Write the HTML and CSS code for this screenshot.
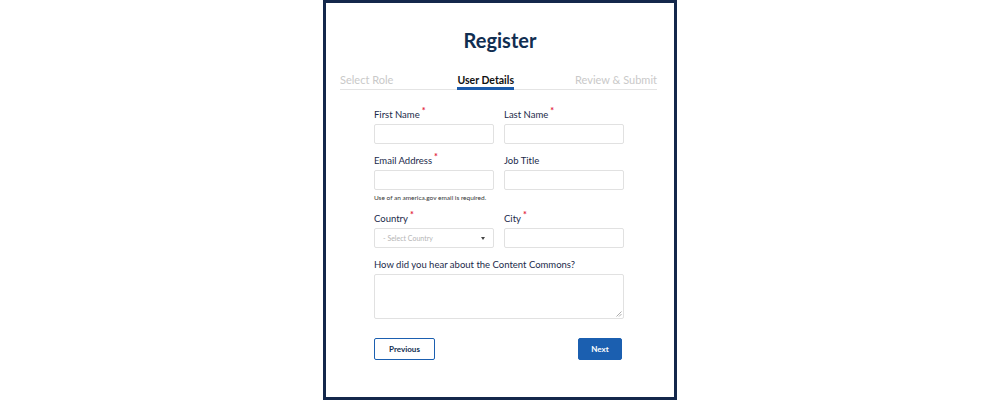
FILE: index.html
```html
<!DOCTYPE html>
<html>
<head>
<meta charset="utf-8">
<link rel="stylesheet" href="styles.css">
</head>
<body>
<div class="frame">
  <h1 class="title">Register</h1>
  <div class="tabs">
    <span class="tab">Select Role</span>
    <span class="tab active">User Details</span>
    <span class="tab">Review &amp; Submit</span>
  </div>
  <form class="form">
    <div class="row">
      <div class="field">
        <label class="label">First Name<sup class="req">*</sup></label>
        <div class="input"></div>
      </div>
      <div class="field">
        <label class="label">Last Name<sup class="req">*</sup></label>
        <div class="input"></div>
      </div>
    </div>
    <div class="row">
      <div class="field">
        <label class="label">Email Address<sup class="req">*</sup></label>
        <div class="input"></div>
        <div class="help">Use of an america.gov email is required.</div>
      </div>
      <div class="field">
        <label class="label">Job Title</label>
        <div class="input"></div>
      </div>
    </div>
    <div class="row">
      <div class="field">
        <label class="label">Country<sup class="req">*</sup></label>
        <div class="input select"><span>- Select Country</span><span class="caret"></span></div>
      </div>
      <div class="field">
        <label class="label">City<sup class="req">*</sup></label>
        <div class="input"></div>
      </div>
    </div>
    <div class="field full">
      <label class="label">How did you hear about the Content Commons?</label>
      <div class="input textarea">
        <svg class="grip" width="6" height="6" viewBox="0 0 6 6"><path d="M5.5 0.5 L0.5 5.5 M5.5 3 L3 5.5" stroke="#999" stroke-width="0.8" fill="none"/></svg>
      </div>
    </div>
    <div class="actions">
      <button type="button" class="btn btn-outline">Previous</button>
      <button type="button" class="btn btn-primary">Next</button>
    </div>
  </form>
</div>
</body>
</html>
```
FILE: styles.css
```css
html, body {
  margin: 0;
  padding: 0;
  background: #fff;
}
body {
  width: 1000px;
  height: 400px;
  display: flex;
  justify-content: center;
  font-family: "Source Sans Pro", Lato, "Noto Sans", sans-serif;
  color: #1b2a4a;
}
.frame {
  box-sizing: border-box;
  width: 354px;
  height: 400px;
  border: 3px solid #14284b;
  background: #fff;
  display: flex;
  flex-direction: column;
  align-items: center;
}
.title {
  margin: 24px 0 0;
  font-size: 20px;
  line-height: 26px;
  font-weight: 700;
  color: #112e51;
}
.tabs {
  margin-top: 20px;
  align-self: stretch;
  margin-left: 14px;
  margin-right: 17px;
  display: flex;
  justify-content: space-between;
  border-bottom: 1px solid #e4e4e4;
  font-size: 11px;
  line-height: 14px;
}
.tab {
  color: #c9c9c9;
  padding-bottom: 1px;
}
.tab.active {
  color: #111;
  font-weight: 700;
  font-size: 10.5px;
  border-bottom: 3px solid #1b5bab;
  margin-bottom: -1px;
  padding-bottom: 0;
  margin-left: 3px;
}
.form {
  margin-top: 18px;
  margin-right: 2px;
  width: 250px;
  display: flex;
  flex-direction: column;
}
.row {
  display: grid;
  grid-template-columns: 120px 120px;
  column-gap: 10px;
  margin-bottom: 10px;
}
.field {
  display: flex;
  flex-direction: column;
}
.field.full {
  width: 250px;
}
.label {
  font-size: 9.5px;
  line-height: 13px;
  color: #1b2a4a;
  margin-bottom: 3px;
}
.req {
  color: #e31c3d;
  font-size: 9px;
  font-weight: 700;
  line-height: 0;
  margin-left: 2px;
  vertical-align: 4px;
}
.input {
  box-sizing: border-box;
  height: 20px;
  border: 1px solid #e1e1e1;
  border-radius: 2px;
  background: #fff;
}
.help {
  margin-top: 4px;
  font-size: 6.5px;
  line-height: 8px;
  color: #333;
}
.select {
  display: flex;
  align-items: center;
  justify-content: space-between;
  padding: 0 8px 0 8px;
  font-size: 7px;
  color: #b5b5b5;
}
.caret {
  width: 0;
  height: 0;
  border-left: 2.5px solid transparent;
  border-right: 2.5px solid transparent;
  border-top: 3px solid #444;
}
.textarea {
  height: 45px;
  position: relative;
}
.grip {
  position: absolute;
  right: 1px;
  bottom: 1px;
}
.actions {
  margin-top: 19px;
  display: flex;
  justify-content: space-between;
  padding-right: 2px;
}
.btn {
  box-sizing: border-box;
  height: 22px;
  border-radius: 2px;
  font-family: inherit;
  font-size: 8px;
  font-weight: 700;
  padding: 0;
  cursor: pointer;
}
.btn-outline {
  width: 61px;
  background: #fff;
  border: 1px solid #1b5fb0;
  color: #112e51;
}
.btn-primary {
  width: 44px;
  background: #1b5fb0;
  border: 1px solid #1b5fb0;
  color: #fff;
}
```
